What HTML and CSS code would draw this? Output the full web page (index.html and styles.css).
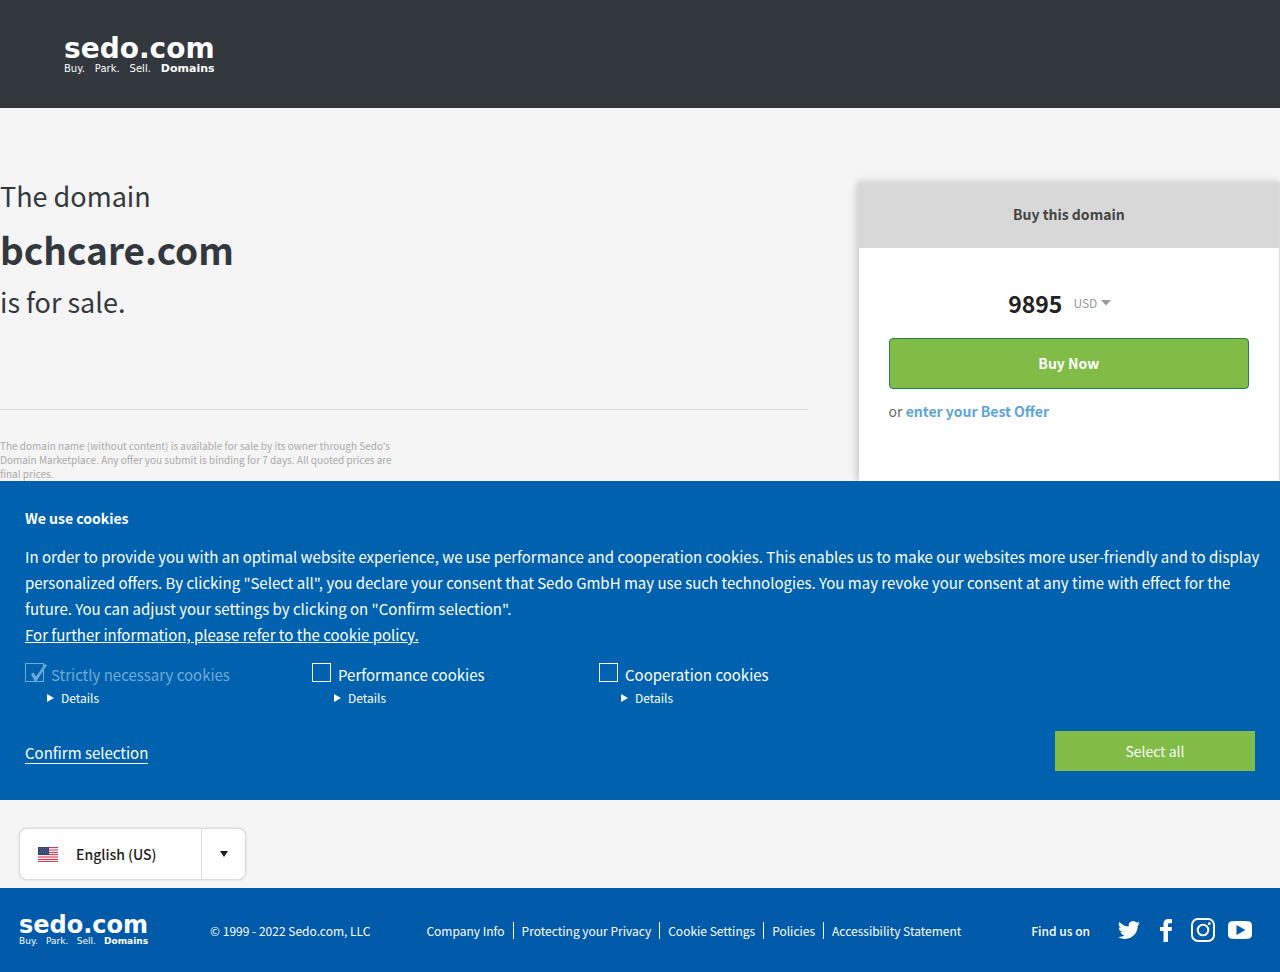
FILE: index.html
```html
<!DOCTYPE html>
<html lang="en">
<head>
<meta charset="utf-8">
<meta name="viewport" content="width=device-width, initial-scale=1">
<title>bchcare.com is for sale</title>
<link rel="stylesheet" href="styles.css">
</head>
<body>
<header class="topbar">
  <a class="logo" href="#">
    <span class="logo-name">sedo.com</span>
    <span class="logo-tag"><span>Buy.</span><span>Park.</span><span>Sell.</span><b>Domains</b></span>
  </a>
</header>

<main class="hero">
  <section class="intro">
    <h1 class="headline">The domain <strong class="domain">bchcare.com</strong> is for sale.</h1>
    <p class="disclaimer">The domain name (without content) is available for sale by its owner through Sedo's Domain Marketplace. Any offer you submit is binding for 7 days. All quoted prices are final prices.</p>
  </section>
  <section class="card">
    <h2 class="card-title">Buy this domain</h2>
    <div class="card-body">
      <div class="price">
        <strong class="amount">9895</strong>
        <label class="currency">
          <select class="currency-select" aria-label="Currency"><option>USD</option></select>
          <svg class="currency-arrow" width="10" height="6" viewBox="0 0 10 6" aria-hidden="true"><path d="M0 0h10L5 5.500z" fill="#999"/></svg>
        </label>
      </div>
      <button class="buy" type="button">Buy Now</button>
      <p class="offer">or <a class="offer-link" href="#">enter your Best Offer</a></p>
    </div>
  </section>
</main>

<section class="cookies" aria-label="Cookies">
  <h2 class="cookies-title">We use cookies</h2>
  <p class="cookies-text">In order to provide you with an optimal website experience, we use performance and cooperation cookies. This enables us to make our websites more user-friendly and to display personalized offers. By clicking "Select all", you declare your consent that Sedo GmbH may use such technologies. You may revoke your consent at any time with effect for the future. You can adjust your settings by clicking on "Confirm selection".<br><a class="policy" href="#">For further information, please refer to the cookie policy.</a></p>
  <div class="options">
    <div class="option">
      <label class="check is-locked">
        <input class="box" type="checkbox" checked disabled>
        <svg class="tick" width="20" height="20" viewBox="0 0 20 20" aria-hidden="true"><path d="M4 11 6.500 9.500 9 13.500 18 1 20 2 9.500 18H7.500z" fill="currentColor"/></svg>
        <span>Strictly necessary cookies</span>
      </label>
      <details class="details"><summary class="summary">Details</summary></details>
    </div>
    <div class="option">
      <label class="check"><input class="box" type="checkbox"><span>Performance cookies</span></label>
      <details class="details"><summary class="summary">Details</summary></details>
    </div>
    <div class="option">
      <label class="check"><input class="box" type="checkbox"><span>Cooperation cookies</span></label>
      <details class="details"><summary class="summary">Details</summary></details>
    </div>
  </div>
  <div class="actions">
    <button class="confirm" type="button">Confirm selection</button>
    <button class="select-all" type="button">Select all</button>
  </div>
</section>

<div class="language-bar">
  <label class="language">
    <svg class="flag" width="20" height="15" viewBox="0 0 20 15" aria-hidden="true">
      <path fill="#fbe3e6" d="M0 0h20v15H0z"/>
      <path stroke="#c8465a" d="M0 .5h20M0 3h20M0 5.500h20M0 7.500h20M0 10h20M0 12.500h20M0 14.500h20"/>
      <path fill="#34456f" d="M0 0h11v8H0z"/>
      <path stroke="#5d6c94" stroke-dasharray="1 1" d="M1 1.500h9M2 3.500h8M1 5.500h9"/>
    </svg>
    <select class="language-select" aria-label="Language"><option>English (US)</option></select>
    <span class="language-toggle"><svg width="8" height="6" viewBox="0 0 8 6" aria-hidden="true"><path d="M0 0h8L4 6z" fill="#222"/></svg></span>
  </label>
</div>

<footer class="footer">
  <a class="logo logo-small" href="#">
    <span class="logo-name">sedo.com</span>
    <span class="logo-tag"><span>Buy.</span><span>Park.</span><span>Sell.</span><b>Domains</b></span>
  </a>
  <p class="copyright">© 1999 - 2022 Sedo.com, LLC</p>
  <nav class="links">
    <a class="link" href="#">Company Info</a>
    <a class="link" href="#">Protecting your Privacy</a>
    <a class="link" href="#">Cookie Settings</a>
    <a class="link" href="#">Policies</a>
    <a class="link" href="#">Accessibility Statement</a>
  </nav>
  <div class="social">
    <span class="find">Find us on</span>
    <div class="icons">
      <a class="icon" href="#" aria-label="Twitter"><svg width="22" height="22" viewBox="0 0 24 24"><path fill="#fff" d="M23.950 4.570a10 10 0 0 1-2.820.770 4.960 4.960 0 0 0 2.160-2.720c-.950.550-2 .950-3.130 1.180a4.920 4.920 0 0 0-8.380 4.480C7.690 8.090 4.070 6.130 1.640 3.160a4.920 4.920 0 0 0 1.520 6.570 4.900 4.900 0 0 1-2.230-.610v.060a4.920 4.920 0 0 0 3.950 4.830 5 5 0 0 1-2.210.080 4.940 4.940 0 0 0 4.600 3.420A9.870 9.870 0 0 1 0 19.540a14 14 0 0 0 7.550 2.210c9.050 0 14-7.500 14-13.980 0-.210 0-.420-.010-.630a10 10 0 0 0 2.410-2.570z"/></svg></a>
      <a class="icon" href="#" aria-label="Facebook"><svg width="12" height="23" viewBox="0 0 12 23"><path fill="#fff" d="M12 .3v3.900H9.500C8.300 4.200 8 4.800 8 5.600V8h4l-.4 4H8v11H3.500V12H0V8h3.500V4.800C3.500 1.700 5.300 0 8.400 0c1.400 0 3.200.1 3.600.3z"/></svg></a>
      <a class="icon" href="#" aria-label="Instagram"><svg width="24" height="24" viewBox="0 0 24 24" fill="none" stroke="#fff" stroke-width="2"><rect x="1" y="1" width="22" height="22" rx="6"/><circle cx="12" cy="12" r="5.300"/><circle cx="18.300" cy="5.700" r="1.400" fill="#fff" stroke="none"/></svg></a>
      <a class="icon" href="#" aria-label="YouTube"><svg width="24" height="18" viewBox="0 0 24 18"><path fill="#fff" fill-rule="evenodd" d="M4 .3C9 0 15 0 20 .3c2.500.1 4 1.500 4 4.200v9c0 2.700-1.500 4.100-4 4.200-5 .3-11 .3-16 0-2.500-.1-4-1.500-4-4.200v-9C0 1.800 1.500.4 4 .3zM8.500 4v10l9-5z"/></svg></a>
    </div>
  </div>
</footer>
</body>
</html>
```
FILE: styles.css
```css
* { box-sizing: border-box; }

body {
  margin: 0;
  min-height: 100vh;
  display: flex;
  flex-direction: column;
  background: #f5f5f5;
  color: #33383e;
  font: 15px/26px "Noto Sans CJK SC", "Noto Sans", sans-serif;
}

h1, h2, p { margin: 0; }
button, select, input { font: inherit; color: inherit; margin: 0; }

/* Header and logo */
.topbar {
  background: #33383f;
  border-bottom: 3px solid #333638;
  padding: 35px 64px 30px;
  display: flex;
}
.logo {
  display: inline-flex;
  flex-direction: column;
  color: #fff;
  text-decoration: none;
  font-family: "DejaVu Sans", sans-serif;
}
.logo-name { font-size: 28px; line-height: 27px; font-weight: 700; }
.logo-tag {
  display: flex;
  justify-content: space-between;
  align-items: baseline;
  font-size: 10px;
  line-height: 13px;
}
.logo-tag b { font-size: 11px; }
.logo-small .logo-name { font-size: 24px; line-height: 22px; }
.logo-small .logo-tag { font-size: 9px; line-height: 11px; }
.logo-small .logo-tag b { font-size: 9px; }

/* Offer */
.hero {
  display: grid;
  grid-template-columns: minmax(0, 1fr) 33%;
  column-gap: 50px;
  padding-top: 75px;
  flex: 1;
}
.headline {
  padding-bottom: 94px;
  border-bottom: 1px solid #ddd;
  font-size: 27px;
  line-height: 26px;
  font-weight: 400;
}
.domain { display: block; font-size: 37px; line-height: 80px; }
.disclaimer {
  max-width: 400px;
  padding-top: 29px;
  font-size: 10px;
  line-height: 14px;
  color: #aaa;
}
.card {
  background: #fff;
  border: 1px solid #ddd;
  border-bottom: 0;
  box-shadow: 0 0 8px rgba(0, 0, 0, .25);
}
.card-title {
  padding-bottom: 4px;
  background: #d8d8d8;
  text-align: center;
  font-size: 14px;
  line-height: 60px;
  color: #444;
}
.card-body { padding: 35px 30px; }
.price {
  display: flex;
  justify-content: center;
  align-items: center;
  gap: 11px;
  padding-right: 18px;
  line-height: 40px;
}
.amount { font-size: 23px; color: #222; }
.currency { display: flex; align-items: center; gap: 4px; color: #999; font-size: 12px; }
.currency-select { appearance: none; border: 0; padding: 0; background: none; }
.buy {
  display: block;
  width: 100%;
  height: 51px;
  margin: 15px 0 9px;
  padding: 0 0 2px;
  border: 1px solid #2a7f4f;
  border-radius: 4px;
  background: #80bc46;
  color: #fff;
  font-size: 14px;
  font-weight: 700;
}
.offer { font-size: 14px; color: #666; }
.offer-link { color: #5ba4dc; font-weight: 700; text-decoration: none; }

/* Cookie banner */
.cookies {
  position: relative;
  background: #0062ae;
  color: #fff;
  padding: 24px 25px 29px;
}
.cookies-title { font-size: 14px; line-height: 26px; }
.cookies-text { margin-right: -10px; padding-top: 13px; }
.policy { color: #fff; }
.options { display: flex; padding-top: 15px; }
.option { width: 287px; }
.check { display: flex; gap: 7px; position: relative; line-height: 24px; }
.box {
  appearance: none;
  width: 19px;
  height: 19px;
  border: 1px solid #fff;
}
.is-locked { color: #70a9d6; }
.is-locked .box { border-color: #70a9d6; }
.tick { position: absolute; left: 2px; top: 0; }
.details { padding: 1px 0 0 22px; font-size: 12px; line-height: 20px; }
.summary { display: flex; align-items: center; gap: 7px; }
.summary::before {
  content: "";
  border-left: 7px solid #fff;
  border-top: 4px solid transparent;
  border-bottom: 4px solid transparent;
}
.actions {
  display: flex;
  justify-content: space-between;
  align-items: center;
  padding-top: 23px;
}
.confirm {
  margin-top: 4px;
  padding: 0;
  border: 0;
  border-bottom: 1px solid #fff;
  background: none;
  line-height: 20px;
}
.select-all {
  width: 200px;
  height: 40px;
  border: 0;
  background: #80bc46;
  font-size: 14px;
}

/* Language */
.language-bar { padding: 28px 19px 8px; }
.language {
  display: inline-flex;
  align-items: center;
  height: 52px;
  padding-left: 18px;
  background: #fff;
  border: 1px solid #ddd;
  border-radius: 8px;
  box-shadow: 0 0 2px rgba(0, 0, 0, .2);
  vertical-align: top;
}
.language-select {
  appearance: none;
  width: 143px;
  border: 0;
  padding: 0 0 0 18px;
  background: none;
  color: #222;
  font-size: 14px;
  font-weight: 500;
}
.language-toggle {
  display: flex;
  align-items: center;
  justify-content: center;
  align-self: stretch;
  width: 44px;
  border-left: 1px solid #ddd;
}

/* Footer */
.footer {
  display: flex;
  align-items: center;
  min-height: 84px;
  padding: 0 22px 0 19px;
  background: #005aaa;
  color: #fff;
  font-size: 12px;
  line-height: 17px;
}
.copyright { margin-left: 62px; }
.links { display: flex; margin-left: 48px; }
.link { padding: 0 8px; color: #fff; text-decoration: none; }
.link + .link { border-left: 1px solid #fff; }
.social { display: flex; align-items: center; gap: 20px; margin-left: auto; }
.find { font-weight: 500; }
.icons { display: flex; align-items: center; }
.icon { display: flex; justify-content: center; width: 37px; }
```
